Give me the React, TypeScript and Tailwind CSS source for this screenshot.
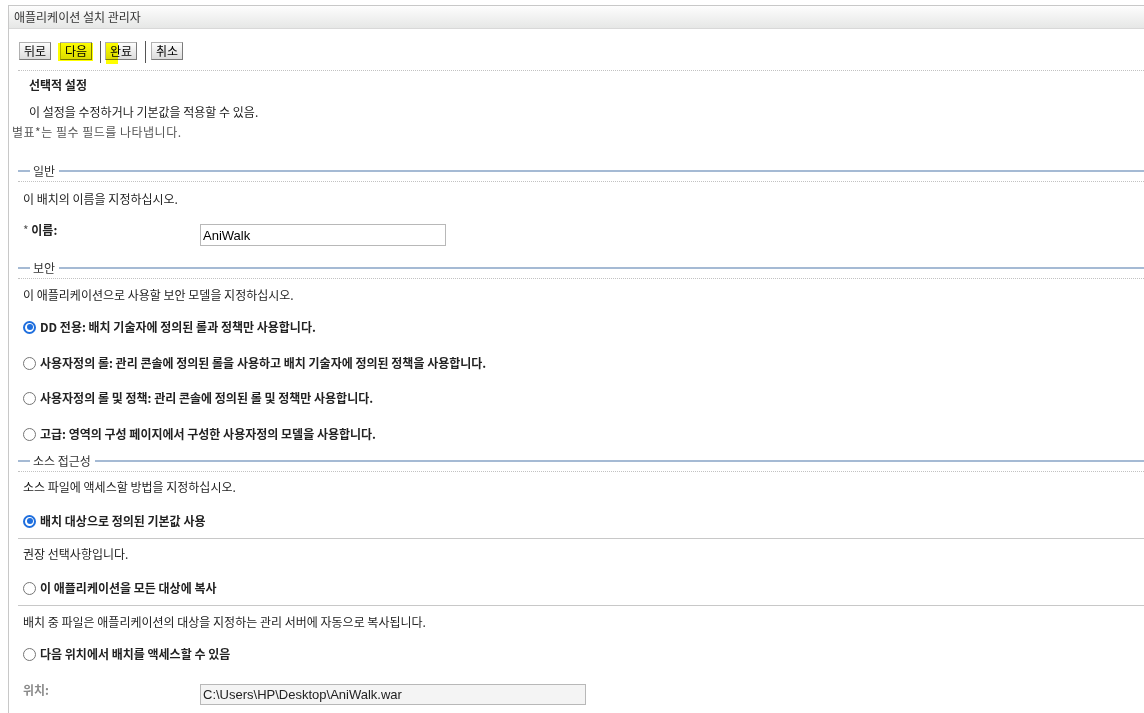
import React from 'react'

type RadioProps = { checked?: boolean; label: React.ReactNode; className?: string }

function RadioDot({ checked }: { checked?: boolean }) {
  if (checked) {
    return (
      <span className="flex h-[13px] w-[13px] shrink-0 items-center justify-center rounded-full border-[2px] border-[#1f6fde] bg-white">
        <span className="h-[6px] w-[6px] rounded-full bg-[#1f6fde]" />
      </span>
    )
  }
  return <span className="h-[13px] w-[13px] shrink-0 rounded-full border border-[#767676] bg-white" />
}

function RadioRow({ checked, label, className }: RadioProps) {
  return (
    <label className={`ml-[14px] flex h-[16px] items-center gap-[4px] font-bold leading-[16px] ${className ?? ''}`}>
      <RadioDot checked={checked} />
      <span>{label}</span>
    </label>
  )
}

function SectionHead({ title, className }: { title: string; className?: string }) {
  return (
    <>
      <div className={`ml-[9px] flex h-[14px] items-center ${className ?? ''}`}>
        <div className="h-[2px] w-[12px] bg-[#a5bad4]" />
        <span className="pl-[3px] pr-[4px] leading-[14px] text-[#333]">{title}</span>
        <div className="h-[2px] flex-1 bg-[#a5bad4]" />
      </div>
      <div className="ml-[9px] mt-[3px] border-t border-dotted border-[#c2c2c2]" />
    </>
  )
}

function ToolButton({ children }: { children: React.ReactNode }) {
  return (
    <button
      type="button"
      className="h-[18px] w-[32px] border border-[#b0b0b0] border-b-[#7a7a7a] border-r-[#7a7a7a] bg-linear-to-b from-[#fdfdfd] to-[#dcdcdc] text-[12px] leading-[16px] text-black"
    >
      {children}
    </button>
  )
}

function Separator() {
  return <div className="mt-[3px] h-[22px] w-[1px] self-start bg-[#555]" />
}

export default function App() {
  return (
    <div className="h-[713px] w-full overflow-hidden bg-white pt-[5px] font-['Noto_Sans_CJK_KR','Noto_Sans',sans-serif] text-[12px] text-[#222]">
      <div className="ml-[8px] h-[720px] border-l border-t border-[#c8c8c8]">
        {/* Header */}
        <div className="flex h-[23px] items-center border-b border-[#d8d8d8] bg-linear-to-b from-[#fdfdfd] to-[#e6e7e6] pl-[5px]">
          <span className="text-[#333]">애플리케이션 설치 관리자</span>
        </div>

        {/* Toolbar */}
        <div className="relative mt-[9px] flex h-[26px] items-center pl-[10px]">
          <ToolButton>뒤로</ToolButton>
          <div className="ml-[9px]">
            <ToolButton>다음</ToolButton>
          </div>
          <div className="ml-[8px] self-start"><Separator /></div>
          <div className="ml-[4px]">
            <ToolButton>완료</ToolButton>
          </div>
          <div className="ml-[8px] self-start"><Separator /></div>
          <div className="ml-[5px]">
            <ToolButton>취소</ToolButton>
          </div>
          {/* marker highlight */}
          <span className="pointer-events-none absolute left-[49px] top-[5px] h-[18px] w-[35px] bg-[#ffff00] mix-blend-multiply" />
          <span className="pointer-events-none absolute left-[97px] top-[5px] h-[21px] w-[12px] bg-[#ffff00] mix-blend-multiply" />
        </div>

        <div className="ml-[9px] mt-[6px] border-t border-dotted border-[#c2c2c2]" />

        <div className="ml-[20px] mt-[6px] h-[16px] font-bold leading-[16px]">선택적 설정</div>
        <div className="ml-[20px] mt-[11px] h-[16px] leading-[16px]">이 설정을 수정하거나 기본값을 적용할 수 있음.</div>
        <div className="ml-[3px] mt-[4px] h-[16px] leading-[16px] tracking-[0.5px] text-[#555]">별표*는 필수 필드를 나타냅니다.</div>

        {/* 일반 */}
        <SectionHead title="일반" className="mt-[24px]" />
        <div className="ml-[14px] mt-[9px] h-[16px] leading-[16px]">이 배치의 이름을 지정하십시오.</div>
        <div className="ml-[14px] mt-[15px] flex items-start">
          <div className="h-[16px] w-[177px] font-bold leading-[16px]">
            <span className="font-normal text-[#555]">*</span> 이름:
          </div>
          <input
            readOnly
            value="AniWalk"
            className="mt-[2px] h-[22px] w-[246px] border border-[#b8b8b8] bg-white pl-[2px] font-['Liberation_Sans',Arial,sans-serif] text-[13px] text-black outline-none"
          />
        </div>

        {/* 보안 */}
        <SectionHead title="보안" className="mt-[15px]" />
        <div className="ml-[14px] mt-[8px] h-[16px] leading-[16px]">이 애플리케이션으로 사용할 보안 모델을 지정하십시오.</div>
        <RadioRow className="mt-[16px]" checked label="DD 전용: 배치 기술자에 정의된 롤과 정책만 사용합니다." />
        <RadioRow className="mt-[20px]" label="사용자정의 롤: 관리 콘솔에 정의된 롤을 사용하고 배치 기술자에 정의된 정책을 사용합니다." />
        <RadioRow className="mt-[19px]" label="사용자정의 롤 및 정책: 관리 콘솔에 정의된 롤 및 정책만 사용합니다." />
        <RadioRow className="mt-[20px]" label="고급: 영역의 구성 페이지에서 구성한 사용자정의 모델을 사용합니다." />

        {/* 소스 접근성 */}
        <SectionHead title="소스 접근성" className="mt-[12px]" />
        <div className="ml-[14px] mt-[7px] h-[16px] leading-[16px]">소스 파일에 액세스할 방법을 지정하십시오.</div>
        <RadioRow className="mt-[18px]" checked label="배치 대상으로 정의된 기본값 사용" />
        <div className="ml-[9px] mt-[9px] border-t border-[#c8c8c8]" />
        <div className="ml-[14px] mt-[7px] h-[16px] leading-[16px]">권장 선택사항입니다.</div>
        <RadioRow className="mt-[18px]" label="이 애플리케이션을 모든 대상에 복사" />
        <div className="ml-[9px] mt-[9px] border-t border-[#c8c8c8]" />
        <div className="ml-[14px] mt-[8px] h-[16px] leading-[16px]">배치 중 파일은 애플리케이션의 대상을 지정하는 관리 서버에 자동으로 복사됩니다.</div>
        <RadioRow className="mt-[16px]" label="다음 위치에서 배치를 액세스할 수 있음" />
        <div className="ml-[14px] mt-[20px] flex items-start">
          <div className="h-[16px] w-[177px] font-bold leading-[16px] text-[#8a8a8a]">위치:</div>
          <input
            readOnly
            value="C:\Users\HP\Desktop\AniWalk.war"
            className="mt-[2px] h-[21px] w-[386px] border border-[#b8b8b8] bg-[#f4f4f4] pl-[2px] font-['Liberation_Sans',Arial,sans-serif] text-[13px] text-[#222] outline-none"
          />
        </div>
      </div>
    </div>
  )
}
